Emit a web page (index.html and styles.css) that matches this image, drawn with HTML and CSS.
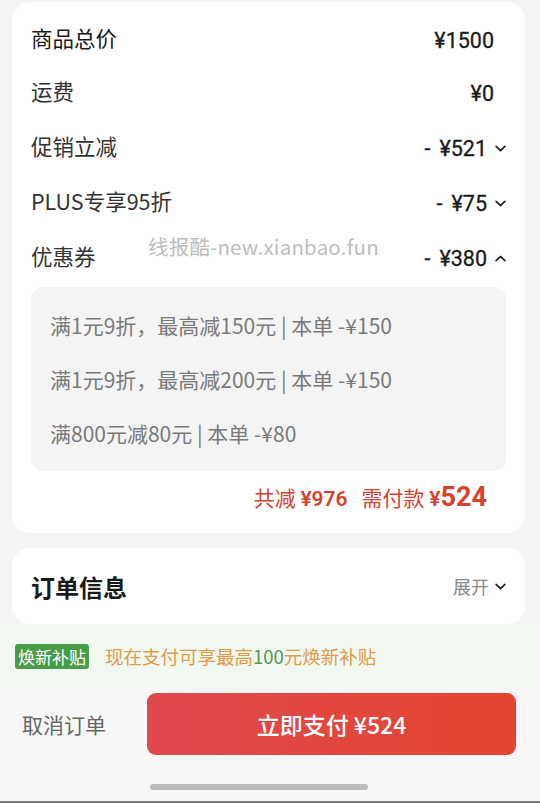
FILE: index.html
```html
<!DOCTYPE html>
<html lang="zh-CN">
<head>
<meta charset="utf-8">
<link rel="stylesheet" href="styles.css">
</head>
<body>
<div class="page">
  <div class="content">
    <section class="card summary">
      <div class="row first"><span class="label dark">商品总价</span><span class="amount">¥1500</span></div>
      <div class="row"><span class="label">运费</span><span class="amount">¥0</span></div>
      <div class="row"><span class="label">促销立减</span><span class="amount has-chev"><span class="minus">-</span>¥521<svg class="chev" viewBox="0 0 10 6"><path d="M1 1l4 4 4-4"/></svg></span></div>
      <div class="row"><span class="label">PLUS专享95折</span><span class="amount has-chev"><span class="minus">-</span>¥75<svg class="chev" viewBox="0 0 10 6"><path d="M1 1l4 4 4-4"/></svg></span></div>
      <div class="row"><span class="label">优惠券</span><span class="amount has-chev"><span class="minus">-</span>¥380<svg class="chev" viewBox="0 0 10 6"><path d="M1 5l4-4 4 4"/></svg></span></div>
      <div class="coupons">
        <div class="coupon">满1元9折，最高减150元 | 本单 -¥150</div>
        <div class="coupon">满1元9折，最高减200元 | 本单 -¥150</div>
        <div class="coupon">满800元减80元 | 本单 -¥80</div>
      </div>
      <div class="total">
        <span>共减 <b class="num">¥976</b></span>
        <span class="need">需付款 <b class="num">¥<span class="big">524</span></b></span>
      </div>
      <div class="watermark">线报酷-new.xianbao.fun</div>
    </section>
    <section class="card info">
      <div class="info-head">
        <span class="info-title">订单信息</span>
        <span class="expand">展开<svg class="chev" viewBox="0 0 10 6"><path d="M1 1l4 4 4-4"/></svg></span>
      </div>
    </section>
  </div>
  <div class="subsidy">
    <span class="badge">焕新补贴</span>
    <span class="subsidy-text">现在支付可享最高<span class="green">100</span>元焕新补贴</span>
  </div>
  <div class="bottom">
    <div class="actions">
      <span class="cancel">取消订单</span>
      <button class="pay">立即支付 ¥524</button>
    </div>
    <div class="home-indicator"></div>
  </div>
</div>
</body>
</html>
```
FILE: styles.css
```css
* { box-sizing: border-box; }
html, body { margin: 0; padding: 0; }
body {
  background: #f4f4f4;
  font-family: "Noto Sans CJK SC", "Noto Sans", sans-serif;
  color: #222;
  width: 540px;
  height: 803px;
  overflow: hidden;
}
.page {
  height: 803px;
  display: flex;
  flex-direction: column;
  border-bottom: 2px solid #777;
}
.content {
  height: 624px;
  overflow: hidden;
  padding: 2px 15px 0 12px;
  display: flex;
  flex-direction: column;
  gap: 15px;
}
.card {
  background: #fff;
  border-radius: 18px;
  padding: 0 19px;
  position: relative;
}
.summary { padding-top: 9px; padding-bottom: 16px; }
.row {
  height: 55px;
  display: flex;
  align-items: center;
  justify-content: space-between;
}
.row.first { height: 52px; }
.label { font-size: 21.5px; color: #333; }
.label.dark { color: #1a1a1a; }
.amount {
  font-family: "Roboto", "Noto Sans CJK SC", sans-serif;
  font-size: 21.5px;
  font-weight: 400;
  color: #1a1a1a;
  display: flex;
  align-items: center;
  padding-right: 12px;
  margin-top: 6px;
  -webkit-text-stroke: 0.3px #1a1a1a;
}
.amount.has-chev { padding-right: 0; }
.minus { margin-right: 9px; }
.amount .chev { margin-left: 8px; }
.chev {
  width: 11px;
  height: 7px;
  fill: none;
  stroke: #222;
  stroke-width: 1.5;
  stroke-linecap: round;
  stroke-linejoin: round;
}
.coupons {
  margin-top: 4px;
  background: #f4f4f4;
  border-radius: 12px;
  padding: 11px 19px;
}
.coupon {
  height: 54px;
  display: flex;
  align-items: center;
  font-size: 21px;
  color: #7a7a7a;
}
.total {
  height: 36px;
  margin-top: 10px;
  display: flex;
  justify-content: flex-end;
  align-items: baseline;
  gap: 14px;
  padding-right: 19px;
  color: #d8402f;
  font-size: 21px;
}
.total .num {
  font-family: "Roboto", sans-serif;
  font-weight: 600;
  font-size: 21px;
}
.total .big { font-size: 27px; font-weight: 700; }
.watermark {
  position: absolute;
  left: 136px;
  top: 229px;
  font-size: 20.5px;
  color: #bdbdbd;
  font-family: "Noto Sans CJK SC", sans-serif;
  letter-spacing: 0.2px;
}
.info { padding-top: 20px; height: 120px; }
.info-head {
  height: 36px;
  display: flex;
  align-items: center;
  justify-content: space-between;
}
.info-title { font-size: 24px; font-weight: 700; color: #1a1a1a; }
.expand {
  font-size: 18px;
  color: #888;
  display: flex;
  align-items: center;
  gap: 6px;
}
.subsidy {
  height: 64px;
  background: #f0f8f0;
  display: flex;
  align-items: center;
  padding-left: 15px;
  gap: 16px;
}
.badge {
  background: #479c4a;
  color: #fff;
  font-size: 17px;
  line-height: 25px;
  padding: 0 3px;
  border-radius: 3px;
}
.subsidy-text { font-size: 18.5px; color: #e39a48; }
.green { color: #4c9a52; }
.bottom {
  flex: 1;
  background: #f6f7f6;
  display: flex;
  flex-direction: column;
}
.actions {
  display: flex;
  align-items: center;
  padding: 5px 24px 0 22px;
  gap: 41px;
}
.cancel { font-size: 21px; color: #666; white-space: nowrap; }
.pay {
  flex: 1;
  height: 62px;
  border: none;
  border-radius: 9px;
  background: linear-gradient(90deg, #e0494f, #e4452f);
  color: #fff;
  font-family: "Noto Sans CJK SC", sans-serif;
  font-size: 23px;
  font-weight: 500;
  padding: 0;
}
.home-indicator {
  width: 218px;
  height: 6px;
  border-radius: 3px;
  background: #bcbcbc;
  margin: 29px 0 0 150px;
}
```
